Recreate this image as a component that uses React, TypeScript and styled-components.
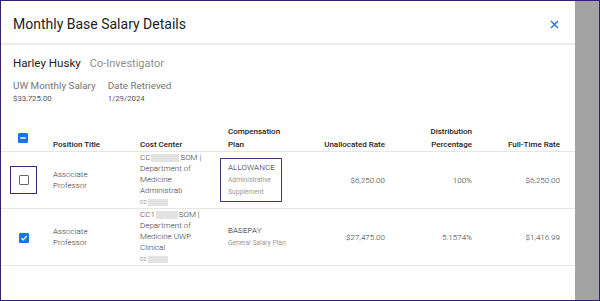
import styled, { createGlobalStyle } from "styled-components"

const GlobalStyle = createGlobalStyle`
  html, body {
    margin: 0;
    padding: 0;
    background: #ffffff;
  }
  * {
    box-sizing: border-box;
  }
`

const Frame = styled.div`
  width: 600px;
  height: 301px;
  border: 1px solid #34206f;
  display: flex;
  overflow: hidden;
  font-family: Roboto, "Liberation Sans", Arial, sans-serif;
`

const Dialog = styled.div`
  width: 574px;
  background: #ffffff;
  display: flex;
  flex-direction: column;
`

const Scrim = styled.div`
  flex: 1;
  background: #a3a3a3;
`

const Header = styled.div`
  height: 44px;
  padding: 4px 16px 0 12px;
  display: flex;
  align-items: center;
  justify-content: space-between;
  border-bottom: 2px solid #ececec;
`

const Title = styled.h2`
  margin: 0;
  font-size: 14px;
  font-weight: 400;
  color: #222222;
`

const CloseButton = styled.button`
  border: 0;
  background: none;
  padding: 0;
  width: 9px;
  height: 9px;
  display: flex;
  cursor: pointer;
`

const Info = styled.div`
  padding: 11px 12px 0;
  height: 80px;
`

const NameRow = styled.div`
  display: flex;
  align-items: baseline;
  gap: 9px;
  line-height: 14px;
`

const Name = styled.span`
  font-size: 11.6px;
  color: #222222;
`

const Role = styled.span`
  font-size: 11px;
  color: #8f8f8f;
`

const Stats = styled.div`
  display: flex;
  gap: 12px;
  margin-top: 9px;
`

const Stat = styled.div`
  display: flex;
  flex-direction: column;
`

const StatLabel = styled.span`
  font-size: 9.9px;
  line-height: 12px;
  color: #757575;
`

const StatValue = styled.span`
  font-size: 7.8px;
  line-height: 10px;
  margin-top: 2px;
  color: #555555;
`

const Table = styled.table`
  width: 574px;
  table-layout: fixed;
  border-collapse: collapse;
`

const HeadCell = styled.th<{ $align?: string; $last?: boolean }>`
  font-size: 8px;
  font-weight: 500;
  color: #222222;
  line-height: 13px;
  padding: 0 ${(p) => (p.$last ? "15px" : p.$align === "right" ? "8px" : "0")} 0
    ${(p) => (p.$align === "right" ? "0" : "8px")};
  text-align: ${(p) => p.$align || "left"};
  vertical-align: bottom;
  border-bottom: 1px solid #e6e6e6;
`

const CheckHead = styled.th`
  vertical-align: bottom;
  padding: 0 0 5px;
  border-bottom: 1px solid #e6e6e6;
`

const Row = styled.tr`
  border-bottom: 1px solid #e6e6e6;
`

const Cell = styled.td<{ $align?: string; $last?: boolean }>`
  font-size: 8px;
  font-weight: 300;
  line-height: 11px;
  color: #333333;
  vertical-align: middle;
  padding: 0 ${(p) => (p.$last ? "15px" : p.$align === "right" ? "8px" : "0")} 0
    ${(p) => (p.$align === "right" ? "0" : "8px")};
  text-align: ${(p) => p.$align || "left"};
  height: 56px;
`

const CheckCell = styled.td`
  text-align: center;
  vertical-align: middle;
  padding: 0 0 0 1px;
`

const FocusRing = styled.div`
  width: 27px;
  height: 28px;
  margin: 0 auto;
  border: 1.5px solid #3d2674;
  display: flex;
  align-items: center;
  justify-content: center;
`

const Box = styled.span<{ $checked?: boolean }>`
  display: inline-flex;
  align-items: center;
  justify-content: center;
  width: 10px;
  height: 10px;
  border-radius: 1px;
  vertical-align: middle;
  background: ${(p) => (p.$checked ? "#1a73e8" : "#ffffff")};
  border: 1px solid ${(p) => (p.$checked ? "#1a73e8" : "#6b6b6b")};
`

const Blur = styled.span<{ $w: number; $h?: number }>`
  display: inline-block;
  width: ${(p) => p.$w}px;
  height: ${(p) => p.$h || 8}px;
  background: #e2e2e2;
  vertical-align: middle;
  margin: 0 1px;
`

const CodeLine = styled.div`
  font-size: 6.5px;
  font-weight: 400;
  line-height: 12px;
  color: #9a9a9a;
`

const PlanBox = styled.div<{ $focused?: boolean }>`
  display: inline-block;
  padding: 3px ${(p) => (p.$focused ? "6px" : "0")} 3px 7px;
  border: 1.5px solid ${(p) => (p.$focused ? "#4b2e83" : "transparent")};
  margin-left: -8px;
`

const PlanName = styled.div`
  font-size: 8px;
  font-weight: 300;
  line-height: 12px;
  color: #222222;
  letter-spacing: 0.1px;
`

const PlanSub = styled.div`
  font-size: 6.7px;
  font-weight: 400;
  line-height: 12px;
  color: #9a9a9a;
`

const CloseIcon = () => (
  <svg width="9" height="9" viewBox="0 0 9 9">
    <path d="M1 1 L8 8 M8 1 L1 8" stroke="#1a73e8" strokeWidth="1.4" fill="none" />
  </svg>
)

const CheckMark = () => (
  <svg width="8" height="8" viewBox="0 0 8 8">
    <path d="M1.3 4.2 L3.2 6 L6.8 2" stroke="#ffffff" strokeWidth="1.2" fill="none" />
  </svg>
)

const Dash = () => (
  <svg width="8" height="8" viewBox="0 0 8 8">
    <path d="M1.2 4 H6.8" stroke="#ffffff" strokeWidth="1.4" fill="none" />
  </svg>
)

export default function App() {
  const rows = [
    {
      checked: false,
      focused: true,
      title: ["Associate", "Professor"],
      ccPrefix: "CC",
      ccBlur: 28,
      ccLines: ["Department of", "Medicine", "Administrati"],
      plan: "ALLOWANCE",
      planSub: ["Administrative", "Supplement"],
      unallocated: "$6,250.00",
      distribution: "100%",
      fullTime: "$6,250.00",
    },
    {
      checked: true,
      focused: false,
      title: ["Associate", "Professor"],
      ccPrefix: "CC1",
      ccBlur: 22,
      ccLines: ["Department of", "Medicine UWP", "Clinical"],
      plan: "BASEPAY",
      planSub: ["General Salary Plan"],
      unallocated: "$27,475.00",
      distribution: "5.1574%",
      fullTime: "$1,416.99",
    },
  ]

  return (
    <>
      <GlobalStyle />
      <Frame>
        <Dialog>
          <Header>
            <Title>Monthly Base Salary Details</Title>
            <CloseButton aria-label="Close">
              <CloseIcon />
            </CloseButton>
          </Header>
          <Info>
            <NameRow>
              <Name>Harley Husky</Name>
              <Role>Co-Investigator</Role>
            </NameRow>
            <Stats>
              <Stat>
                <StatLabel>UW Monthly Salary</StatLabel>
                <StatValue>$33,725.00</StatValue>
              </Stat>
              <Stat>
                <StatLabel>Date Retrieved</StatLabel>
                <StatValue>1/29/2024</StatValue>
              </Stat>
            </Stats>
          </Info>
          <Table>
            <colgroup>
              <col style={{ width: 44 }} />
              <col style={{ width: 87 }} />
              <col style={{ width: 88 }} />
              <col style={{ width: 80 }} />
              <col style={{ width: 93 }} />
              <col style={{ width: 87 }} />
              <col style={{ width: 95 }} />
            </colgroup>
            <thead>
              <tr>
                <CheckHead>
                  <Box $checked>
                    <Dash />
                  </Box>
                </CheckHead>
                <HeadCell>Position Title</HeadCell>
                <HeadCell>Cost Center</HeadCell>
                <HeadCell>
                  Compensation
                  <br />
                  Plan
                </HeadCell>
                <HeadCell $align="right">Unallocated Rate</HeadCell>
                <HeadCell $align="right">
                  Distribution
                  <br />
                  Percentage
                </HeadCell>
                <HeadCell $align="right" $last>
                  Full-Time Rate
                </HeadCell>
              </tr>
            </thead>
            <tbody>
              {rows.map((row, i) => (
                <Row key={i}>
                  <CheckCell>
                    {row.focused ? (
                      <FocusRing>
                        <Box />
                      </FocusRing>
                    ) : (
                      <Box $checked={row.checked}>{row.checked && <CheckMark />}</Box>
                    )}
                  </CheckCell>
                  <Cell>
                    {row.title[0]}
                    <br />
                    {row.title[1]}
                  </Cell>
                  <Cell>
                    <div>
                      {row.ccPrefix}
                      <Blur $w={row.ccBlur} />
                      SOM |
                    </div>
                    {row.ccLines.map((line) => (
                      <div key={line}>{line}</div>
                    ))}
                    <CodeLine>
                      cc
                      <Blur $w={20} $h={7} />
                    </CodeLine>
                  </Cell>
                  <Cell>
                    <PlanBox $focused={row.focused}>
                      <PlanName>{row.plan}</PlanName>
                      {row.planSub.map((s) => (
                        <PlanSub key={s}>{s}</PlanSub>
                      ))}
                    </PlanBox>
                  </Cell>
                  <Cell $align="right">{row.unallocated}</Cell>
                  <Cell $align="right">{row.distribution}</Cell>
                  <Cell $align="right" $last>
                    {row.fullTime}
                  </Cell>
                </Row>
              ))}
            </tbody>
          </Table>
        </Dialog>
        <Scrim />
      </Frame>
    </>
  )
}
